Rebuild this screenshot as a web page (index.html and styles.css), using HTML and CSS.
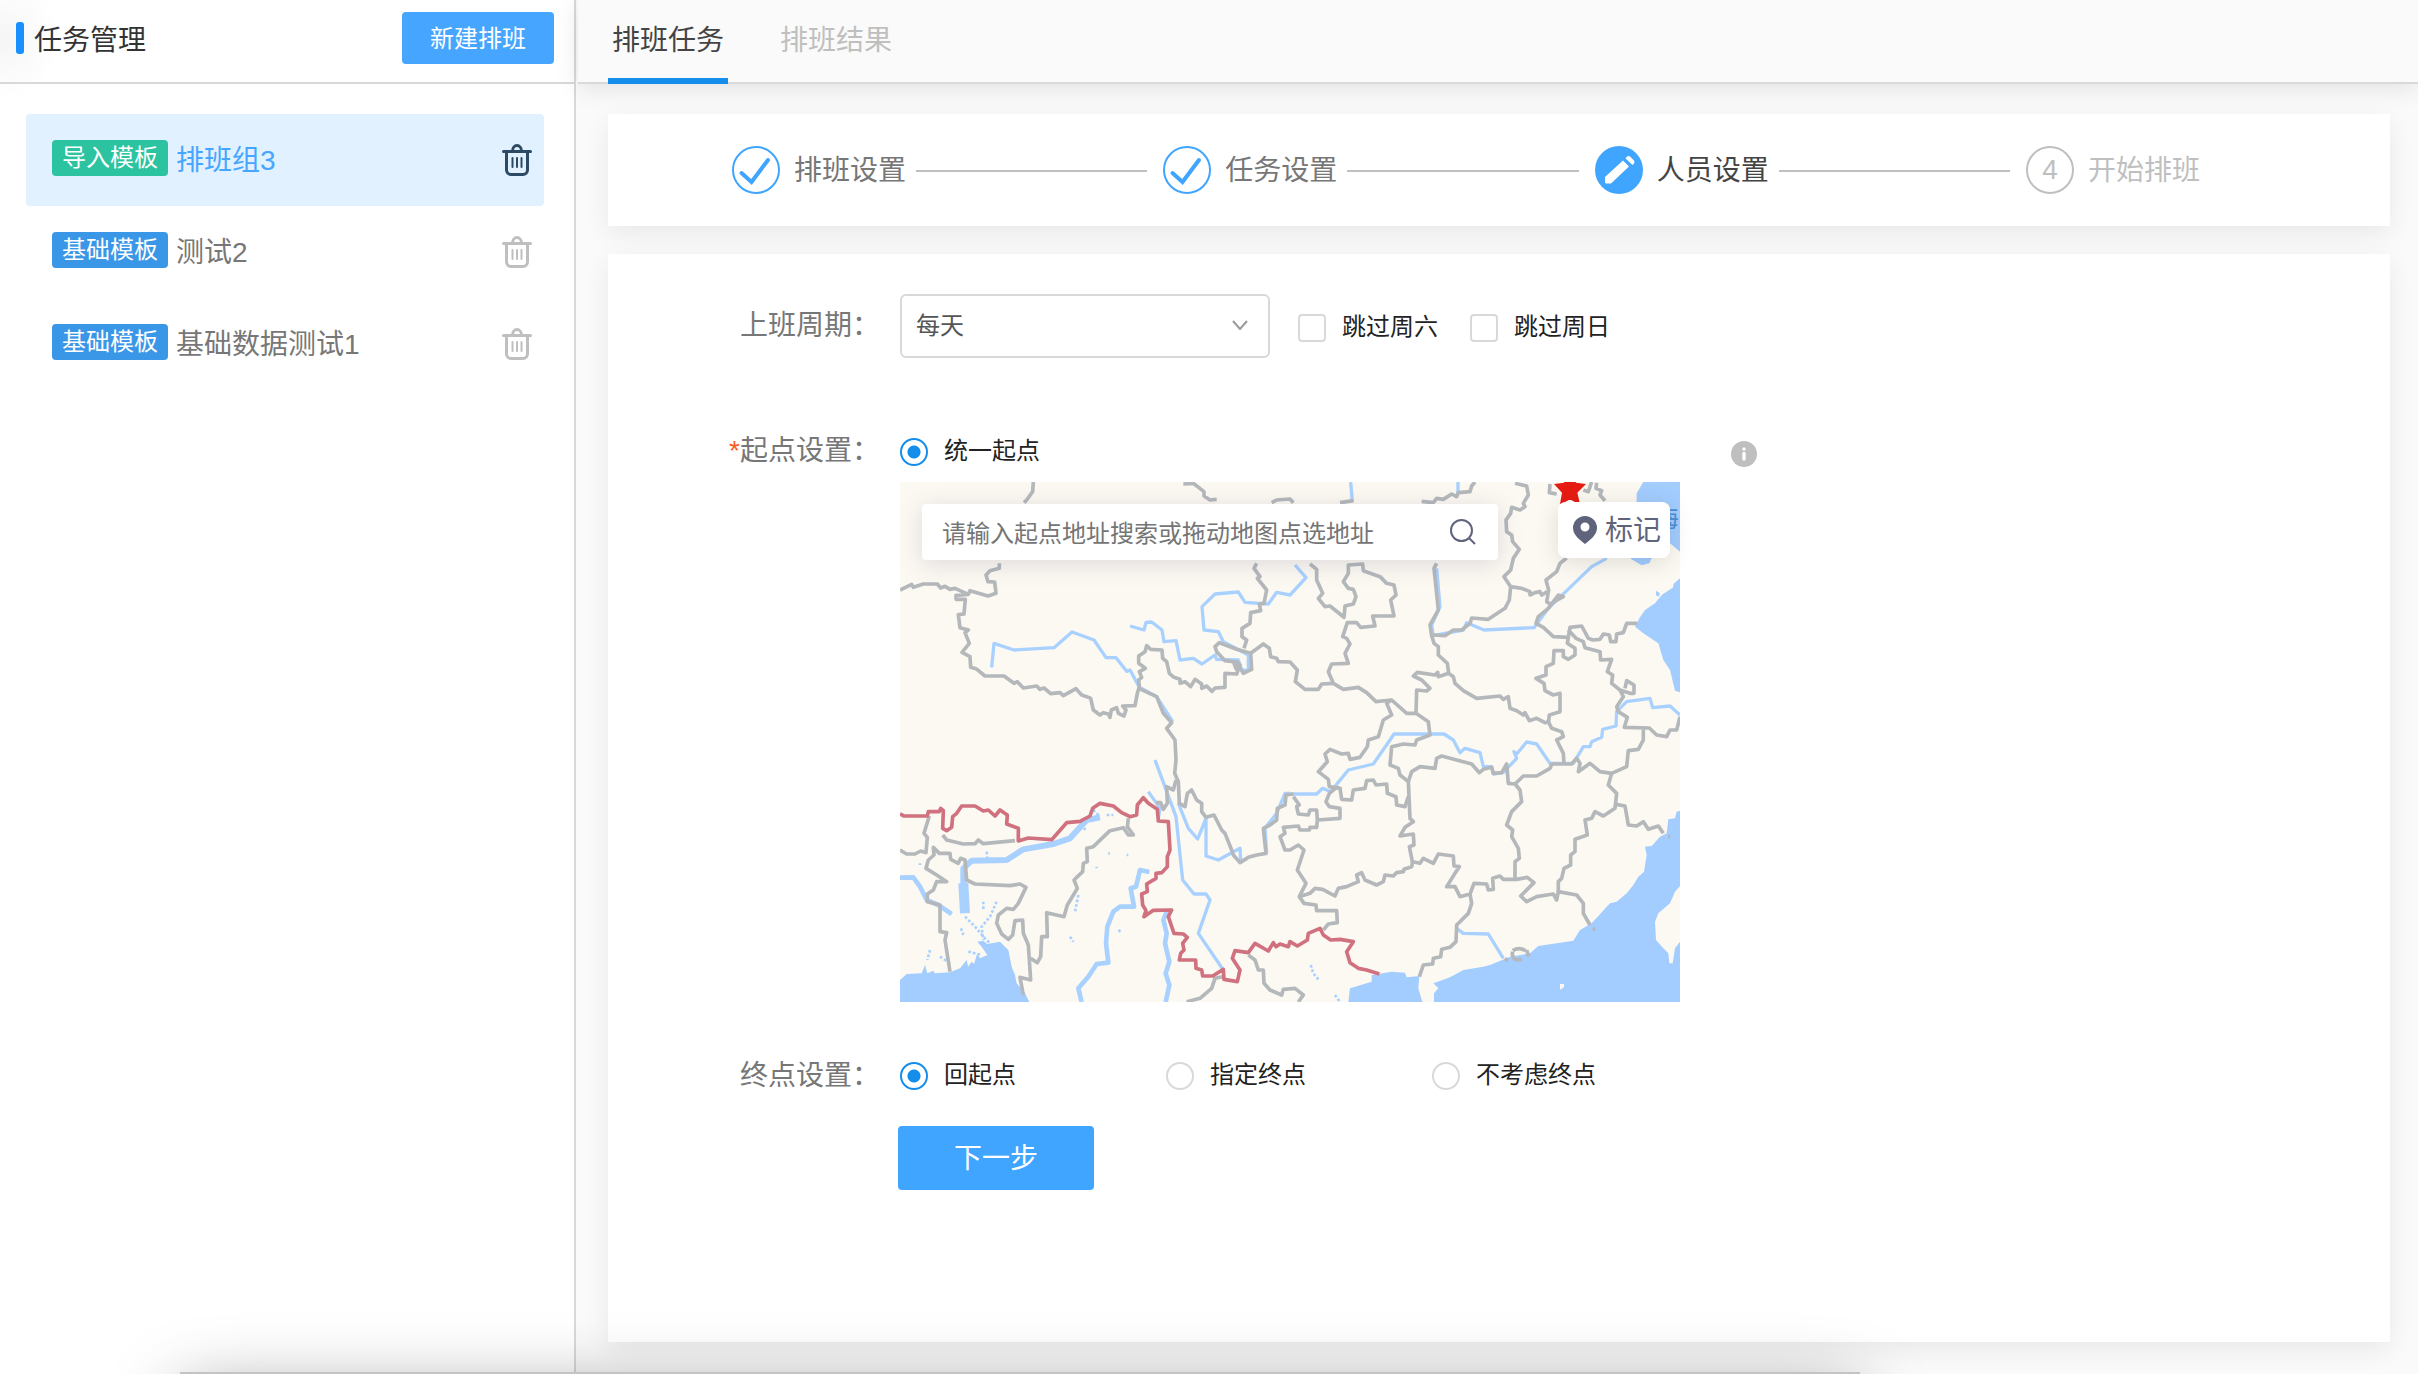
FILE: index.html
```html
<!DOCTYPE html>
<html lang="zh-CN">
<head>
  <meta charset="UTF-8">
  <meta name="viewport" content="width=device-width, initial-scale=1.0">
  <title>任务管理</title>
  <link rel="stylesheet" href="styles.css">
</head>
<body>

  <!-- shared icons -->
  <svg class="defs" width="0" height="0" aria-hidden="true">
    <symbol id="icon-trash" viewBox="0 0 30 32">
      <g fill="none" stroke="currentColor" stroke-linecap="round">
        <path stroke-width="3" d="M1.5 7.5h27M4.5 8v18a4.5 4.5 0 0 0 4.5 4.5h12a4.5 4.5 0 0 0 4.5-4.5V8M10.5 7a4.5 5.5 0 0 1 9 0"/>
        <path stroke-width="2" d="M10.5 14v9M15 14v9M19.5 14v9"/>
      </g>
    </symbol>
    <symbol id="icon-check" viewBox="0 0 48 48">
      <circle cx="24" cy="24" r="23" fill="none" stroke="#40a5ff" stroke-width="2"/>
      <path d="M9.5 27l10 9L36 14" fill="none" stroke="#40a5ff" stroke-width="4" stroke-linecap="round"/>
    </symbol>
  </svg>

  <aside class="sidebar">
    <header class="sidebar-header">
      <h1>任务管理</h1>
      <button class="btn-new" type="button">新建排班</button>
    </header>
    <ul class="task-list">
      <li class="task active">
        <span class="tag tag-import">导入模板</span>
        <span class="task-name">排班组3</span>
        <button class="btn-delete" type="button" aria-label="删除"><svg width="30" height="32"><use href="#icon-trash"/></svg></button>
      </li>
      <li class="task">
        <span class="tag">基础模板</span>
        <span class="task-name">测试2</span>
        <button class="btn-delete" type="button" aria-label="删除"><svg width="30" height="32"><use href="#icon-trash"/></svg></button>
      </li>
      <li class="task">
        <span class="tag">基础模板</span>
        <span class="task-name">基础数据测试1</span>
        <button class="btn-delete" type="button" aria-label="删除"><svg width="30" height="32"><use href="#icon-trash"/></svg></button>
      </li>
    </ul>
  </aside>

  <div class="main">
    <nav class="tabs">
      <a href="#task" class="active">排班任务</a>
      <a href="#result">排班结果</a>
    </nav>

    <div class="content">
      <ol class="card steps">
        <li class="step">
          <svg width="48" height="48"><use href="#icon-check"/></svg>
          <span>排班设置</span>
        </li>
        <li class="step-line"></li>
        <li class="step">
          <svg width="48" height="48"><use href="#icon-check"/></svg>
          <span>任务设置</span>
        </li>
        <li class="step-line"></li>
        <li class="step current">
          <svg width="48" height="48" viewBox="0 0 48 48">
            <circle cx="24" cy="24" r="24" fill="#40a5ff"/>
            <path fill="#fff" d="M10 37v-6L28 14.5l6 6L16 37.5h-5zM30.5 12.5l1.5-2q1.5-1 3 0l4 4q1 1.5 0 3l-1.5 1.5z"/>
          </svg>
          <span>人员设置</span>
        </li>
        <li class="step-line"></li>
        <li class="step waiting">
          <b class="step-num">4</b>
          <span>开始排班</span>
        </li>
      </ol>

      <form class="card form">
        <div class="row row-period">
          <label class="label" for="period">上班周期：</label>
          <div class="select">
            <select id="period"><option>每天</option></select>
            <svg width="16" height="10" viewBox="0 0 16 10"><path d="M1 1l7 8 7-8" fill="none" stroke="#999" stroke-width="2"/></svg>
          </div>
          <label class="check"><input type="checkbox"><span>跳过周六</span></label>
          <label class="check"><input type="checkbox"><span>跳过周日</span></label>
        </div>

        <div class="row row-start">
          <span class="label"><i>*</i>起点设置：</span>
          <div class="start">
            <div class="start-head">
              <label class="radio"><input type="radio" name="start" checked><span>统一起点</span></label>
              <svg class="info" width="26" height="26" viewBox="0 0 26 26">
                <circle cx="13" cy="13" r="13" fill="#bfbfbf"/>
                <circle cx="13" cy="8" r="1.7" fill="#fff"/>
                <path d="M13 12.5v5.5" stroke="#fff" stroke-width="3.4" stroke-linecap="round"/>
              </svg>
            </div>

            <div class="map">
              <svg class="map-canvas" viewBox="0 6 2340 1560" preserveAspectRatio="xMidYMid slice">
                <!-- sea -->
                <g class="water">
                  <path d="M2230 6H2340V215L2310 190 2255 235 2248 250 2225 256 2192 236 2190 150 2210 100 2210 40z"/>
                  <path d="M2340 295L2320 312 2320 322 2285 345 2265 370 2235 390 2218 415 2205 440 2230 460 2275 490 2290 540 2310 570 2325 632 2340 637zM2268 332l12 8-4 10-8-4z"/>
                  <path d="M0 1500L20 1482 65 1480 75 1455 82 1480 100 1472 104 1480 150 1477 180 1465 200 1440 204 1460 215 1445 222 1452 232 1420 240 1435 262 1425 245 1400 232 1385 250 1382 262 1392 300 1385 325 1410 335 1460 345 1485 350 1510 375 1540 388 1566H0z"/>
                  <path d="M2340 992L2330 995 2325 1015 2305 1018 2300 1060 2280 1070 2255 1098 2235 1100 2240 1125 2232 1175 2215 1190 2200 1215 2180 1240 2150 1265 2130 1270 2075 1330 2040 1350 2020 1382 1915 1398 1890 1420 1830 1430 1770 1455 1750 1460 1690 1470 1650 1492 1600 1510 1615 1525 1602 1540 1602 1566H2340z"/>
                  <path d="M1345 1566L1350 1525 1415 1505 1415 1485 1475 1475 1515 1478 1520 1492 1558 1488 1555 1525 1567 1566z"/>
                </g>
                <path class="land" d="M2340 1218L2325 1235 2310 1270 2275 1300 2265 1325 2268 1380 2290 1405 2305 1420 2308 1450 2318 1450 2325 1405 2340 1385zM1980 1512h12v8l-8 8h-4z"/>
                <!-- rivers -->
                <g class="river">
                  <path d="M275 562L282 490 342 510 462 503 516 456 582 480 618 533 648 533 680 574 690 570 718 622 770 650 818 725"/>
                  <path d="M690 438L732 450 738 427 755 426 786 450 792 485 828 482 840 540 880 535 906 552 945 525 950 538 1015 540 1025 570 1045 572"/>
                  <path d="M1185 255L1218 293 1170 345 1130 337 1105 372 1035 367 1015 336 945 342 906 380 912 450 955 455 970 485 1045 525 1045 572"/>
                  <path d="M1352 6L1357 66M1674 6V40"/>
                  <path d="M1610 265L1620 380 1595 435 1600 467 1690 450 1700 428 1752 450 1902 443 1945 385 2075 260 2120 235"/>
                  <path d="M1170 942H1250L1268 925 1292 935 1345 870 1420 852 1470 780 1482 762H1632L1660 780 1680 818 1695 805 1740 818 1750 860 1775 860 1780 882 1810 878 1850 835 1842 815 1850 822 1880 786 1910 792 1950 850H2020L2050 800H2070L2075 785 2105 772 2108 748 2148 738 2150 695 2180 665 2250 655 2258 683 2310 678 2340 705"/>
                  <path d="M765 840L828 1010 848 1200 882 1242H918L930 1260 895 1360 970 1470"/>
                  <path d="M745 935L780 985 775 1015M835 970L865 1045 893 1077 918 1015V1128L955 1140 1020 1105 1022 1140"/>
                  <path d="M1100 1120L1095 1045 1130 1000 1155 940H1170"/>
                  <path d="M1670 1345L1690 1360 1765 1362 1810 1435"/>
                  <path class="wide" d="M0 1193L40 1192 60 1220 80 1260 115 1275 155 1302"/>
                  <path class="wide" d="M748 1176L720 1170 708 1220 692 1225 702 1280 660 1280 640 1295 622 1340 618 1390 625 1448 590 1452 565 1490 535 1525 545 1566"/>
                  <path class="wide" d="M800 1295L790 1320 800 1360 795 1390 808 1445 797 1480 808 1515 797 1566"/>
                  <path class="wider" d="M190 1220V1165L215 1142 320 1140 370 1108 460 1092 510 1075 560 1020 600 1012"/>
                  <path class="widest" d="M190 1210L195 1300"/>
                  <path class="dots" d="M195 1310L225 1340 250 1370 270 1390M290 1265L270 1310 245 1340 250 1380M250 1265V1290M90 1410L82 1440M120 1430L150 1450M183 1345L190 1365M60 1150V1155M260 1115L262 1135M620 1005H640M550 1047H562M625 1120H630M680 1125H685M590 1160V1165M535 1245L525 1295M510 1370L520 1385M655 1350L662 1355M1232 1455L1240 1480 1258 1502M1305 1545L1320 1566M205 1415L245 1425M580 990L600 1010"/>
                </g>
                <!-- province borders -->
                <g class="border">
                  <path d="M400 6L398 35 380 60 372 68M850 12L880 10 912 35V48L930 60 950 58M1115 68L1130 60 1170 57 1180 68"/>
                  <path d="M298 250V265L270 272 258 285 264 305 284 306 288 340 264 348 210 332 205 343"/>
                  <path d="M0 330L35 313 40 322 70 312H112L122 324 135 319 150 328 165 325 205 343 168 346V358H196L192 402 175 404 180 443 205 450 195 458 208 490 186 517 210 530 212 562 228 566 255 588H312L342 610 352 605 370 624 410 618 420 628 432 624 452 641 480 638 490 647 528 626 545 645 560 650 572 655 580 690 600 705 610 698 625 702 630 712 634 690 650 683 655 700 672 708 678 690 668 678 705 677 712 640 718 620 716 600 725 592 718 575 736 565 716 550V528L735 515 740 497 752 508 786 510 788 535 800 545 808 580 822 592 840 598V610L855 605 872 620 885 598 905 612V625L920 618 936 634 945 624 975 622V580L1010 582 1020 555 1010 545 1030 580 1055 568 1052 520 1010 508 958 488 945 500 950 515 975 542 1000 545 1010 570"/>
                  <path d="M1070 250L1062 265 1080 290 1072 295 1100 330 1092 370 1078 372 1082 392 1052 398 1050 430 1026 445V470L1040 480 1032 505"/>
                  <path d="M1052 520L1090 492 1108 505 1112 530 1130 535 1135 545 1170 546 1192 570 1186 605 1215 628H1255L1265 612 1300 610"/>
                  <path d="M718 626L770 650 790 700 815 728 800 745 825 780 828 840 824 880 835 905 838 970 855 980 862 940 875 930 890 960 905 970V995L918 1012 942 1005 965 1050 975 1060 995 1110 1000 1125 1020 1148 1045 1132 1070 1125 1098 1120 1090 1045 1110 1035 1130 1020 1132 985 1155 975 1158 945 1180 942"/>
                  <path d="M828 900L820 930 800 920 802 970 790 988 782 968 768 968"/>
                  <path d="M1725 6L1715 18 1710 35 1675 38 1670 50 1655 42 1630 58 1610 55 1600 68 1565 64M1320 68L1360 62"/>
                  <path d="M1845 10L1880 18 1885 45 1870 70 1875 80 1860 90 1835 82 1832 100 1818 120 1820 155 1835 165 1838 185 1858 208 1840 235 1832 270 1812 290 1832 320 1828 360 1815 385 1765 418 1715 414 1710 430 1685 450 1660 450 1635 467 1600 465"/>
                  <path d="M1832 320L1865 325 1890 335V345L1905 338 1920 335 1925 345 1942 335"/>
                  <path d="M1950 12L1948 38 1970 42M2075 6L2065 35 2050 30M2090 8L2088 25 2105 32 2100 45 2115 62"/>
                  <path d="M2000 234L1980 250 1970 275 1938 300 1946 330 1940 365 1950 372 1990 350 1975 345 1960 365 1945 385 1915 410 1908 430 1930 442 1960 470 2005 472 2002 490 2025 505V525L2005 538 1990 530V512H1962L1960 550 1938 560V585L1908 595 1932 610 1935 632 1960 645 1980 640V695L1948 705 1945 730"/>
                  <path d="M2005 472L2010 442 2045 438 2065 475 2078 480 2100 478 2110 462 2128 465 2132 485H2148L2150 462 2170 458 2180 430 2212 430"/>
                  <path d="M2005 450L2028 475 2050 485 2055 503 2100 515 2102 540 2135 538 2122 575 2138 585 2135 610 2160 630 2170 650 2150 680 2155 695 2182 712 2173 742 2248 744 2270 765 2300 770 2310 750 2330 750 2340 710M2160 630L2190 640H2202V615L2180 602 2175 625M2230 744V780L2215 808 2185 812 2180 860 2135 880"/>
                  <path d="M1610 250L1602 265 1615 390 1590 435 1595 467 1602 490 1615 500V525L1642 550 1646 580 1660 590 1665 610 1690 632 1730 655 1800 648 1810 658 1825 650 1830 685 1850 692 1870 705 1875 698 1888 722 1910 715 1935 728 1945 725 1955 745 1985 755 1990 770 1970 780 1990 820 1992 852"/>
                  <path d="M1646 580L1615 590 1613 577 1605 585 1552 577 1540 588 1565 600 1590 625 1580 633 1550 630 1548 700 1520 700 1475 660 1428 665 1400 638 1375 622 1330 628 1300 610 1285 575 1295 552 1345 550 1335 520 1350 492 1340 475 1328 470 1342 428H1370L1382 442 1425 438 1418 408H1482L1472 360 1488 345 1482 315 1460 310 1440 290 1390 272 1388 252 1345 255V280L1330 305 1345 325 1360 328 1368 350 1360 372 1335 378 1332 412 1320 402 1290 378 1275 380 1255 355 1268 340 1250 300V268L1230 252"/>
                  <path d="M1475 660L1460 670 1475 705 1450 720 1435 770 1405 780 1402 800 1380 832 1350 838 1345 820 1325 822 1290 808 1275 822 1282 845 1255 875 1285 898 1288 920 1320 925 1325 958 1355 960 1360 930 1395 925 1400 902 1420 900 1428 915 1460 912 1462 940 1488 950 1490 975 1515 980 1525 950"/>
                  <path d="M1548 700L1585 725 1590 765 1550 780 1545 795 1510 792 1475 800 1470 855 1495 865 1500 885 1525 905 1530 1015 1540 1025 1515 1042 1500 1068 1540 1062 1542 1095 1528 1100 1538 1150"/>
                  <path d="M1325 928L1310 922 1288 940 1278 965 1288 980 1320 985V1015L1252 1020 1250 990H1230L1225 1005 1195 1002 1190 980 1198 975 1180 950M1252 1020L1250 1042H1230L1228 1050H1200L1195 1038 1150 1042 1155 1060 1140 1070 1155 1110H1170L1195 1095 1212 1110 1192 1170 1218 1210 1198 1250 1212 1270 1248 1275 1250 1292H1310L1312 1328 1285 1332 1270 1350"/>
                  <path d="M1198 1250L1230 1240 1245 1225 1268 1228 1305 1248 1315 1225 1340 1220 1375 1205 1370 1185 1385 1178 1395 1200 1430 1215 1450 1205 1455 1185 1480 1188 1490 1178 1510 1175 1512 1168 1535 1160 1538 1145 1560 1150 1570 1135 1600 1150 1615 1122 1660 1128 1662 1158 1678 1160 1665 1180 1640 1220 1665 1220 1680 1250 1710 1242 1722 1210 1760 1212 1765 1230 1780 1228 1778 1195 1800 1188 1810 1198H1850L1882 1192 1902 1208 1862 1248 1880 1265 1910 1250 1960 1242 1970 1260 1975 1235 2030 1245 2050 1270V1300L2070 1335"/>
                  <path d="M1525 905L1535 875 1560 860 1605 865 1610 835 1625 828 1715 852 1738 878 1750 868 1775 862 1780 880 1805 878 1820 852 1825 910 1845 912 1860 930 1865 965 1835 995 1820 1035 1838 1050 1835 1070 1855 1105 1858 1135 1845 1145V1198"/>
                  <path d="M1845 912L1870 888H1910L1950 865 1955 852H2015L2030 835 2040 850 2035 875 2070 850 2100 875 2135 880 2125 915 2150 940 2145 985 2110 1008 2085 995 2075 1015 2055 1020 2062 1065 2025 1078V1115L2012 1125V1155L1992 1165 1985 1195 1975 1205V1235"/>
                  <path d="M2148 973L2175 978 2185 1035 2210 1038 2230 1025 2245 1048 2275 1038 2290 1060"/>
                  <path d="M1710 1242L1715 1270 1705 1300 1670 1335 1668 1385 1650 1402 1625 1408 1622 1430 1600 1435 1598 1452 1570 1455 1558 1490"/>
                  <path d="M1838 1412q20-12 38 0M1838 1415q-4 14 8 24h20M1880 1410l6 20M1815 1435l8 8M2078 1347h8M2304 1070h6"/>
                  <path d="M88 1008L72 1060 82 1072 78 1118 62 1113 45 1122H20L0 1110M128 1065L140 1080 190 1092 225 1091 235 1080 250 1091 345 1082"/>
                  <path d="M370 1545L360 1492 392 1500 385 1395 370 1360 368 1320 345 1322 338 1365 325 1378 305 1362 290 1330 295 1305 320 1285 340 1288 355 1270 378 1222 360 1212 330 1217 225 1212 200 1200 195 1140 182 1135 175 1150 152 1138 150 1120H118L100 1102 102 1125 85 1140 78 1165 110 1185 140 1205H110L100 1230 82 1242V1265L120 1275V1355L140 1358 135 1380 150 1475"/>
                  <path d="M392 1435L412 1448 422 1430 425 1370H442L440 1298 492 1310 502 1275 532 1225 522 1200 548 1175 550 1150 562 1145 560 1105 580 1100 630 1052 670 1043 685 1065 700 1065 682 1040 685 1015"/>
                  <path d="M1045 1425L1065 1440 1075 1470H1090L1092 1510 1110 1530 1145 1545 1150 1528 1185 1525 1210 1545 1195 1566M968 1490L945 1495 935 1525 900 1555 860 1565"/>
                </g>
                <path class="frontier" d="M0 1002L12 1008H82L85 995H118L122 985 130 992 128 1045 140 1052 155 1042 158 1010 170 1000 185 978H225L250 993 265 990 285 1008 300 990 322 1005 320 1032 355 1045V1083L385 1074 455 1079 500 1028 540 1024 570 1008 578 985 600 970 640 978 665 998 690 1010 710 1005 712 975 730 953 745 970 772 988 775 1023 805 1025 810 1110 802 1130V1160L785 1178 768 1180V1195L740 1212 742 1235 725 1242 728 1275 738 1292 732 1310 760 1291 815 1290 805 1310 822 1360 850 1362 862 1372 848 1390 852 1410 842 1420 838 1440H887L888 1465 905 1470 908 1488H938L970 1468 972 1498 1012 1505 1020 1470 997 1435 1005 1412 1045 1418 1065 1390 1105 1413 1120 1388 1128 1400 1140 1392 1165 1400 1170 1385 1192 1398 1222 1380 1225 1360 1260 1345 1270 1365 1292 1380 1320 1378 1360 1385 1340 1415 1350 1448 1375 1465 1400 1470 1438 1482"/>
                <text class="sea-name" x="2336" y="140" text-anchor="end">海</text>
                <path class="capital" d="M2010-40L2028 8 2058 12 2032 38 2040 72 2010 60 1980 72 1986 38 1962 12 1992 8z"/>
                <circle cx="2010" cy="76" r="16" fill="#fff"/>
              </svg>

              <div class="map-tools">
                <div class="search">
                  <input type="text" aria-label="起点地址" placeholder="请输入起点地址搜索或拖动地图点选地址">
                  <svg width="26" height="26" viewBox="0 0 26 26"><g fill="none" stroke="#5f647c" stroke-width="2"><circle cx="11.5" cy="11.5" r="10.5"/><path d="M19 19l6 6"/></g></svg>
                </div>
                <button class="btn-mark" type="button">
                  <svg width="24" height="28" viewBox="0 0 24 28"><path fill="#5f647c" fill-rule="evenodd" d="M12 0a12 12 0 0 1 12 12c0 7-7 12-12 16C7 24 0 19 0 12A12 12 0 0 1 12 0zm0 6.5a4.5 4.5 0 1 0 0 9 4.5 4.5 0 0 0 0-9z"/></svg>
                  <span>标记</span>
                </button>
              </div>
            </div>
          </div>
        </div>

        <div class="row row-end">
          <span class="label">终点设置：</span>
          <label class="radio"><input type="radio" name="end" checked><span>回起点</span></label>
          <label class="radio"><input type="radio" name="end"><span>指定终点</span></label>
          <label class="radio"><input type="radio" name="end"><span>不考虑终点</span></label>
        </div>

        <button class="btn-next" type="button">下一步</button>
      </form>
    </div>
  </div>

  <div class="dock-shadow"></div>

</body>
</html>
```

FILE: styles.css
```css
* {
  box-sizing: border-box;
}

body {
  margin: 0;
  height: 100vh;
  display: flex;
  gap: 2px;
  overflow: hidden;
  background: #fafafa;
  color: #222;
  font-family: "Liberation Sans", "Noto Sans CJK SC", sans-serif;
  font-size: 24px;
}

button,
input,
select {
  font: inherit;
}

button {
  padding: 0 0 4px;
  border: none;
  cursor: pointer;
}

ul,
ol {
  margin: 0;
  padding: 0;
  list-style: none;
}

svg {
  display: block;
  flex: none;
}

.defs {
  position: absolute;
}

/* sidebar */
.sidebar {
  flex: none;
  width: 576px;
  background: radial-gradient(circle at 0 40px, #f5f5f5, #fff 60px);
  border-right: 2px solid #d9d9d9;
}

.sidebar-header {
  height: 84px;
  display: flex;
  align-items: center;
  justify-content: space-between;
  padding: 0 20px 6px 16px;
  border-bottom: 2px solid #d9d9d9;
}

.sidebar-header h1 {
  display: flex;
  align-items: center;
  gap: 10px;
  margin: 0;
  font-size: 28px;
  font-weight: normal;
  color: #333;
}

.sidebar-header h1::before {
  content: "";
  width: 8px;
  height: 32px;
  border-radius: 3px;
  background: #1890ff;
}

.btn-new {
  width: 152px;
  height: 52px;
  border-radius: 4px;
  background: #46a6ff;
  color: #fff;
}

.task-list {
  padding: 30px 30px 0 26px;
}

.task {
  height: 92px;
  display: flex;
  align-items: center;
  gap: 8px;
  padding: 0 12px 0 26px;
  border-radius: 4px;
  color: #777;
}

.task.active {
  background: #e2f1ff;
}

.tag {
  height: 36px;
  margin-bottom: 4px;
  padding: 0 10px;
  border-radius: 4px;
  background: #3a97e8;
  color: #fff;
  line-height: 36px;
}

.tag-import {
  background: #2bc3a0;
}

.task-name {
  flex: 1;
  padding-bottom: 4px;
  font-size: 28px;
}

.task.active .task-name {
  color: #46a6ff;
}

.btn-delete {
  padding: 0;
  background: none;
  color: #bfbfbf;
}

.task.active .btn-delete {
  color: #2c4a63;
}

/* tabs */
.main {
  flex: 1;
  min-width: 0;
  display: flex;
  flex-direction: column;
}

.tabs {
  height: 84px;
  display: flex;
  gap: 48px;
  padding-left: 30px;
  border-bottom: 2px solid #d9d9d9;
  box-shadow: 0 4px 24px rgba(0, 0, 0, 0.1);
}

.tabs a {
  height: 84px;
  padding: 0 4px;
  border-bottom: 6px solid transparent;
  color: #bfbfbf;
  font-size: 28px;
  line-height: 82px;
  text-decoration: none;
}

.tabs a.active {
  border-color: #148eea;
  color: #444;
}

.content {
  flex: 1;
  display: flex;
  flex-direction: column;
  gap: 28px;
  padding: 30px 28px 32px 30px;
}

.card {
  background: #fff;
  box-shadow: 0 8px 24px rgba(0, 0, 0, 0.07);
}

/* steps */
.steps {
  height: 112px;
  display: flex;
  align-items: center;
  padding: 0 190px 0 124px;
}

.step {
  display: flex;
  align-items: center;
  gap: 14px;
  color: #777;
  font-size: 28px;
}

.step span {
  padding-bottom: 4px;
}

.step.current {
  color: #444;
}

.step.waiting {
  color: #bfbfbf;
}

.step-num {
  width: 48px;
  height: 48px;
  border: 2px solid #bfbfbf;
  border-radius: 50%;
  font-weight: normal;
  line-height: 44px;
  text-align: center;
}

.step-line {
  flex: 1;
  height: 2px;
  margin: 2px 16px 0 10px;
  background: #bfbfbf;
}

/* form */
.form {
  flex: 1;
  padding: 40px 0;
}

.row {
  display: flex;
}

.label {
  flex: none;
  width: 292px;
  padding-right: 20px;
  color: #777;
  font-size: 28px;
  line-height: 58px;
  text-align: right;
}

.label i {
  color: #ff5a1f;
  font-style: normal;
}

.row-period {
  align-items: center;
  margin-bottom: 64px;
}

.select {
  position: relative;
  width: 370px;
}

.select select {
  appearance: none;
  width: 100%;
  height: 64px;
  padding: 0 14px 2px;
  border: 2px solid #d9d9d9;
  border-radius: 6px;
  background: #fff;
  color: #555;
}

.select svg {
  position: absolute;
  top: 26px;
  right: 22px;
  pointer-events: none;
}

.check,
.radio {
  display: flex;
  align-items: center;
  gap: 16px;
}

.check span,
.radio span {
  padding-bottom: 8px;
}

.check {
  margin-left: 28px;
  padding-top: 4px;
}

.check + .check {
  margin-left: 32px;
}

.check input,
.radio input {
  appearance: none;
  width: 28px;
  height: 28px;
  margin: 0;
  border: 2px solid #d9d9d9;
  border-radius: 4px;
  background: #fff;
}

.radio input {
  border-radius: 50%;
}

.radio input:checked {
  border-color: #148eea;
  background: radial-gradient(circle, #148eea 6px, #fff 7px);
}

.start-head {
  width: 857px;
  height: 60px;
  display: flex;
  align-items: center;
  justify-content: space-between;
}

.info {
  margin-top: 4px;
}

.row-end {
  align-items: center;
  height: 60px;
  margin: 44px 0 20px;
}

.row-end .label {
  line-height: 56px;
}

.row-end .radio {
  width: 266px;
}

.btn-next {
  width: 196px;
  height: 64px;
  margin-left: 290px;
  border-radius: 4px;
  background: #40a5ff;
  color: #fff;
  font-size: 28px;
}

/* map */
.map {
  position: relative;
  width: 780px;
  height: 520px;
}

.map-canvas {
  width: 100%;
  height: 100%;
  background: #fcf9f2;
}

.water {
  fill: #a3cdff;
}

.land {
  fill: #fcf9f2;
}

.river,
.border,
.frontier {
  fill: none;
  stroke-linejoin: round;
}

.river {
  stroke: #a9d1ff;
  stroke-width: 10px;
}

.river .wide {
  stroke-width: 14px;
}

.river .wider {
  stroke-width: 18px;
}

.river .widest {
  stroke-width: 30px;
}

.river .dots {
  stroke-width: 8px;
  stroke-dasharray: 8 6;
}

.border {
  stroke: #b4b8bb;
  stroke-width: 11px;
}

.frontier {
  stroke: #d0717f;
  stroke-width: 11px;
}

.sea-name {
  fill: #4d8fd6;
  font-size: 72px;
}

.capital {
  fill: #e61c14;
}

/* search box and marker button float over the map */
.map-tools {
  position: absolute;
  top: 20px;
  left: 22px;
  right: 10px;
  display: flex;
  align-items: flex-start;
  justify-content: space-between;
}

.search {
  width: 576px;
  height: 56px;
  display: flex;
  align-items: center;
  margin-top: 2px;
  padding: 0 22px 0 20px;
  border-radius: 4px;
  background: #fff;
  box-shadow: 0 4px 24px rgba(95, 90, 130, 0.2);
}

.search input {
  flex: 1;
  min-width: 0;
  padding: 4px 0 0;
  border: none;
  outline: none;
  background: none;
}

.search input::placeholder {
  color: #757575;
}

.btn-mark {
  width: 112px;
  height: 56px;
  display: flex;
  align-items: center;
  justify-content: center;
  gap: 8px;
  padding: 0 0 0 6px;
  border-radius: 8px;
  background: #fff;
  box-shadow: 0 4px 24px rgba(0, 0, 0, 0.12);
  color: #5f647c;
  font-size: 28px;
}

.btn-mark span {
  padding-bottom: 4px;
}

/* soft edge along the bottom of the window */
.dock-shadow {
  position: fixed;
  left: 180px;
  right: 558px;
  bottom: -98px;
  height: 100px;
  background: #c4c4c4;
  box-shadow: 0 20px 70px rgba(0, 0, 0, 0.4);
  pointer-events: none;
}
```
